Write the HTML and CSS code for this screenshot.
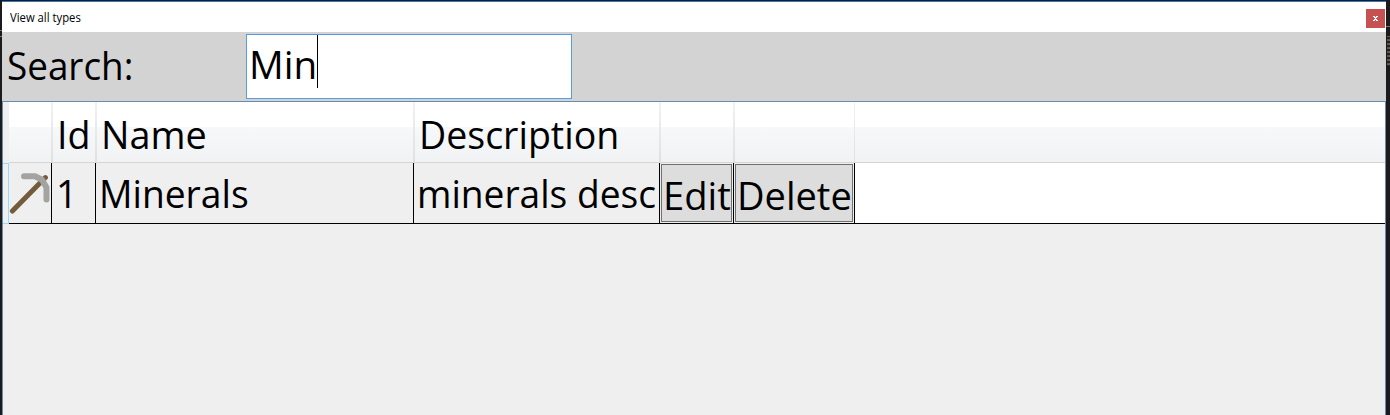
FILE: index.html
```html
<!DOCTYPE html>
<html lang="en">
<head>
<meta charset="utf-8">
<title>View all types</title>
<link rel="stylesheet" href="styles.css">
</head>
<body>
<div class="desktop">
  <main class="window">
    <header class="titlebar">
      <span class="title">View all types</span>
      <button class="close" aria-label="Close"><svg width="5" height="5" viewBox="0 0 5 5" shape-rendering="crispEdges"><path d="M0 0h2v1h1V0h2v1H4v1H3v1h1v1h1v1H3V4H2v1H0V4h1V3h1V2H1V1H0z" fill="#fff"/></svg></button>
    </header>
    <div class="toolbar">
      <label class="label"><span class="t t-search">Search:</span></label>
      <div class="textbox"><span class="t t-min">Min</span><i class="caret"></i></div>
    </div>
    <section class="datagrid">
      <div class="head">
        <div class="corner"></div>
        <div class="th"></div>
        <div class="th"><span class="t t-id">Id</span></div>
        <div class="th"><span class="t t-name">Name</span></div>
        <div class="th"><span class="t t-description">Description</span></div>
        <div class="th"></div>
        <div class="th th-last"></div>
        <div></div>
      </div>
      <div class="row">
        <div class="row-header"></div>
        <div class="td icon-cell"><svg width="42" height="60" viewBox="9 163 42 60"><path d="M12.4 211 45.4 177.6" stroke="#735c3b" stroke-width="5" stroke-linecap="round"/><path d="M24 176.2H35L42 179.7 46.5 187.5V199.5" fill="none" stroke="#a3a3a1" stroke-width="6" stroke-linecap="round" stroke-linejoin="round"/></svg></div>
        <div class="td"><span class="t t-one">1</span></div>
        <div class="td"><span class="t t-minerals">Minerals</span></div>
        <div class="td"><span class="t t-desc">minerals desc</span></div>
        <div class="td"><button class="btn"><span class="t t-edit">Edit</span></button></div>
        <div class="td"><button class="btn"><span class="t t-delete">Delete</span></button></div>
        <div class="filler"></div>
      </div>
    </section>
  </main>
</div>
</body>
</html>
```
FILE: styles.css
```css
* { box-sizing: border-box; }
body { margin: 0; overflow: hidden; font-family: "Open Sans", "Noto Sans", sans-serif; color: #000; }
button { font-family: inherit; color: inherit; border: 0; padding: 0; }
.desktop {
  height: 415px;
  padding: 1px 4px 0 2px;
  background:
    linear-gradient(#77777a, #77777a) 0 30px / 2px 1px no-repeat,
    linear-gradient(#77777a, #77777a) 0 36px / 2px 1px no-repeat,
    repeating-linear-gradient(#6d5b50 0 1px, #24211f 1px 3px, #555 3px 4px) 1387px 36px / 3px 30px no-repeat,
    linear-gradient(#77777a, #77777a) 1386px 26px / 4px 1px no-repeat,
    #1b1b1d;
}
.window { height: 414px; display: flex; flex-direction: column; background: #efefef; border-top: 1px solid #2f78bf; }
.titlebar { height: 30px; flex: none; display: flex; justify-content: space-between; background: #fff; padding: 7px 1px 0 8px; }
.title { font-size: 12px; line-height: 17px; white-space: nowrap; transform: scaleX(.94); transform-origin: 0 0; }
.close { width: 19px; height: 19px; background: #c75050; display: flex; align-items: center; justify-content: center; }
.toolbar { height: 69px; flex: none; display: flex; background: #d3d3d3; }
.label { width: 244px; padding: 3px 0 0 5px; }
.textbox { width: 326px; height: 65px; margin-top: 2px; display: flex; background: #fff; border: 1px solid #569de5; padding: 0 0 0 2px; }
.caret { width: 1px; height: 53px; background: #000; }
.t { display: inline-block; font-size: 39.2px; line-height: 60px; white-space: nowrap; transform-origin: 0 0; }
.t-search { transform: scaleX(.94); }
.t-min { width: 68px; height: 60px; line-height: 57px; transform: scaleX(.985); }
.t-id { transform: scaleX(.96); }
.t-name { transform: scaleX(.965); }
.t-description { transform: scaleX(.957); }
.t-one { transform: translateX(1px) scaleX(.96); }
.t-minerals { transform: scaleX(.95); }
.t-desc { transform: scaleX(.948); }
.t-edit { transform: scaleX(.975); }
.t-delete { transform: scaleX(.97); }
.datagrid { flex: 1; border: 1px solid #688caf; border-bottom: 0; }
.head {
  display: grid; grid-template-columns: 6px 44px 44px 318px 246px 74px 120px 1fr; height: 61px;
  border-bottom: 1px solid #d5d5d5;
  background: linear-gradient(#fff 0 25px, #f7f8fa 25px, #f0f2f4 100%);
}
.corner { background: #efefef; height: 61px; }
.th { border-right: 2px solid; border-image: linear-gradient(#f2f2f2, #dedfe1) 1; padding: 2px 0 0 4px; min-width: 0; }
.th-last { border-right-width: 1px; }
.row { display: grid; grid-template-columns: 6px 43px 44px 318px 246px 74px 121px 1fr; height: 61px; }
.row-header { border: 1px solid #99d9f5; border-left: 0; }
.td { min-width: 0; border-right: 1px solid #000; border-bottom: 1px solid #000; padding-left: 3px; }
.icon-cell { padding: 0; }
.icon-cell svg { display: block; }
.td:has(.btn) { padding: 1px; }
.btn { display: block; width: 100%; height: 58px; background: #ddd; border: 1px solid #707070; text-align: left; padding: 0 0 0 1px; overflow: hidden; }
.btn .t { display: block; width: 0; line-height: 60px; }
.filler { background: #fff; border-bottom: 1px solid #000; }
```
